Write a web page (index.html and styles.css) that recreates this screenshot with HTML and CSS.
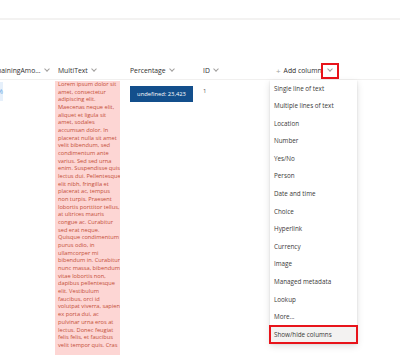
FILE: index.html
```html
<!DOCTYPE html>
<html lang="en">
<head>
    <meta charset="UTF-8">
    <meta name="viewport" content="width=device-width, initial-scale=1.0">
    <title>List view</title>
    <link rel="stylesheet" href="styles.css">
</head>
<body>
    <div class="top-bar"></div>

    <div class="list">
        <!-- column headers -->
        <div class="row header">
            <div class="cell">RemainingAmo... <span class="chev"></span></div>
            <div class="cell multi-head">MultiText <span class="chev"></span></div>
            <div class="cell">Percentage <span class="chev"></span></div>
            <div class="cell">ID <span class="chev"></span></div>
            <div class="cell add-col">
                <span class="plus">+</span> Add column
                <span class="chev-box"><span class="chev"></span></span>

                <div class="menu">
                    <div class="menu-item">Single line of text</div>
                    <div class="menu-item">Multiple lines of text</div>
                    <div class="menu-item">Location</div>
                    <div class="menu-item">Number</div>
                    <div class="menu-item">Yes/No</div>
                    <div class="menu-item">Person</div>
                    <div class="menu-item">Date and time</div>
                    <div class="menu-item">Choice</div>
                    <div class="menu-item">Hyperlink</div>
                    <div class="menu-item">Currency</div>
                    <div class="menu-item">Image</div>
                    <div class="menu-item">Managed metadata</div>
                    <div class="menu-item">Lookup</div>
                    <div class="menu-item">More...</div>
                    <div class="menu-item selected">Show/hide columns</div>
                </div>
            </div>
        </div>

        <!-- first item -->
        <div class="row item">
            <div class="cell"><span class="pill">%</span></div>
            <div class="cell">
                <div class="multi-text">Lorem ipsum dolor sit<br>amet, consectetur<br>adipiscing elit.<br>Maecenas neque elit,<br>aliquet et ligula sit<br>amet, sodales<br>accumsan dolor. In<br>placerat nulla sit amet<br>velit bibendum, sed<br>condimentum ante<br>varius. Sed sed urna<br>enim. Suspendisse quis<br>lectus dui. Pellentesque<br>elit nibh, fringilla et<br>placerat ac, tempus<br>non turpis. Praesent<br>lobortis porttitor tellus,<br>at ultrices mauris<br>congue ac. Curabitur<br>sed erat neque.<br>Quisque condimentum<br>purus odio, in<br>ullamcorper mi<br>bibendum in. Curabitur<br>nunc massa, bibendum<br>vitae lobortis non,<br>dapibus pellentesque<br>elit. Vestibulum<br>faucibus, orci id<br>volutpat viverra, sapien<br>ex porta dui, ac<br>pulvinar urna eros at<br>lectus. Donec feugiat<br>felis felis, et faucibus<br>velit tempor quis. Cras</div>
            </div>
            <div class="cell"><div class="bar">undefined: 23,423</div></div>
            <div class="cell id">1</div>
            <div class="cell"></div>
        </div>
    </div>
</body>
</html>
```

FILE: styles.css
```css
*{
    padding: 0;
    margin: 0;
    box-sizing: border-box;
}

:root {
    --text-color: #323130;
    --muted: #a19f9d;
    --line: #f3f2f1;
    --accent-color: #134f8c;
    --highlight: #e8141b;
}

body {
    width: 400px;
    height: 355px;
    overflow: hidden;
    background: #fff;
    font-family: "Open Sans", "Noto Sans", sans-serif;
    color: var(--text-color);
}

.top-bar {
    height: 20px;
    border-bottom: 2px solid var(--line);
}

.list {
    margin-top: 42px;
    margin-left: -20px;
}

.row {
    display: grid;
    grid-template-columns: 75px 72px 73px 73px 1fr;
}

.header {
    height: 18px;
    border-bottom: 1px solid #f1f0ef;
    font-size: 6.8px;
    align-items: center;
}

.header .cell {
    display: flex;
    align-items: center;
    gap: 3px;
    white-space: nowrap;
    padding-left: 3px;
}

.header .cell:first-child {
    padding-left: 7px;
}

.chev {
    display: inline-block;
    width: 4px;
    height: 4px;
    margin-left: 1px;
    margin-top: -3px;
    border-right: 0.8px solid var(--muted);
    border-bottom: 0.8px solid var(--muted);
    transform: rotate(45deg);
}

.add-col {
    position: relative;
}

.plus {
    color: var(--muted);
    font-size: 8px;
}

.chev-box {
    display: flex;
    align-items: center;
    justify-content: center;
    width: 18px;
    height: 16px;
    margin-left: -4px;
    border: 2px solid var(--highlight);
}

.chev-box .chev {
    margin: -3px 0 0 0;
}

/* dropdown with the column types */
.menu {
    position: absolute;
    top: 17px;
    left: -3px;
    width: 87px;
    background: #fff;
    box-shadow: 0 3px 7px rgba(0, 0, 0, 0.13), 0 0.6px 1.8px rgba(0, 0, 0, 0.11);
    z-index: 2;
}

.menu-item {
    height: 17.6px;
    line-height: 17.6px;
    padding-left: 4px;
    font-size: 6.3px;
    color: #3b3a39;
}

.menu-item.selected {
    background: var(--line);
    outline: 2px solid var(--highlight);
    outline-offset: -1px;
}

.item {
    padding-top: 1px;
    font-size: 5.7px;
}

.item .cell {
    padding-left: 3px;
}

.item .cell:first-child {
    padding-left: 7px;
    padding-top: 1px;
}

.pill {
    display: block;
    width: 16px;
    height: 19px;
    line-height: 19px;
    text-align: right;
    background: #e6f0fb;
    color: #6aa7e3;
    font-size: 7px;
}

.item .cell:nth-child(2) {
    padding-left: 0;
}

.multi-text {
    width: 65px;
    height: 290px;
    padding: 0 0 0 3px;
    background: #fdd6d4;
    color: #c44f38;
    line-height: 7.67px;
    white-space: nowrap;
    overflow: hidden;
}

.bar {
    width: 63px;
    height: 16px;
    margin-top: 5px;
    background: var(--accent-color);
    color: #fff;
    font-size: 5.8px;
    line-height: 16px;
    text-align: center;
}

.id {
    padding-top: 6px;
    font-size: 6px;
    color: #605e5c;
}
```
